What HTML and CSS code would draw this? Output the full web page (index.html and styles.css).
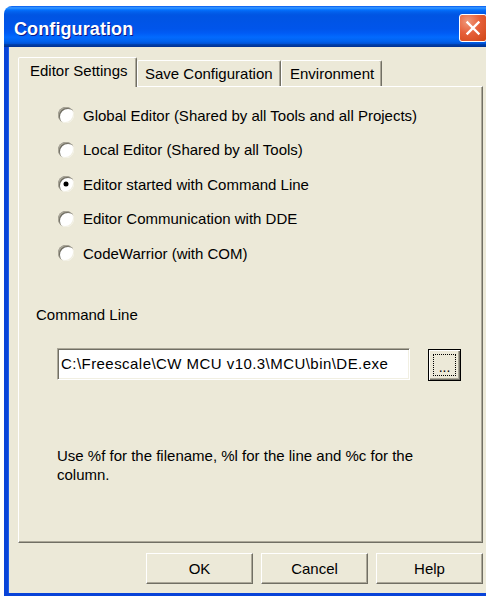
FILE: index.html
```html
<!DOCTYPE html>
<html lang="en">
<head>
<meta charset="utf-8">
<title>Configuration</title>
<link rel="stylesheet" href="styles.css">
</head>
<body>
<div class="window">
  <div class="titlebar">
    <span class="title">Configuration</span>
    <button class="close" aria-label="Close">
      <svg width="16" height="16" viewBox="0 0 16 16"><path d="M2.5 2.5 L13.5 13.5 M13.5 2.5 L2.5 13.5" stroke="#fff" stroke-width="2.4" stroke-linecap="square" fill="none"/></svg>
    </button>
  </div>
  <div class="client">
    <div class="tabs">
      <div class="tab tab-editor active">Editor Settings</div>
      <div class="tab tab-save">Save Configuration</div>
      <div class="tab tab-env">Environment</div>
    </div>
    <div class="panel">
      <div class="options">
        <label class="option"><span class="radio"></span>Global Editor (Shared by all Tools and all Projects)</label>
        <label class="option"><span class="radio"></span>Local Editor (Shared by all Tools)</label>
        <label class="option"><span class="radio checked"></span>Editor started with Command Line</label>
        <label class="option"><span class="radio"></span>Editor Communication with DDE</label>
        <label class="option"><span class="radio"></span>CodeWarrior (with COM)</label>
      </div>
      <div class="field-label">Command Line</div>
      <div class="field-row">
        <input class="textbox" type="text" value="C:\Freescale\CW MCU v10.3\MCU\bin\DE.exe" readonly>
        <button class="browse"><span class="focus">...</span></button>
      </div>
      <p class="hint">Use %f for the filename, %l for the line and %c for the column.</p>
    </div>
    <div class="actions">
      <button class="btn">OK</button>
      <button class="btn">Cancel</button>
      <button class="btn">Help</button>
    </div>
  </div>
</div>
</body>
</html>
```
FILE: styles.css
```css
* {
  box-sizing: border-box;
}

html, body {
  margin: 0;
  width: 486px;
  height: 596px;
  overflow: hidden;
  background: #fff;
}

body {
  font-family: "Liberation Sans", Arial, sans-serif;
  font-size: 15px;
  color: #000;
}

button, input {
  font-family: inherit;
  font-size: inherit;
  color: inherit;
}

/* window frame */
.window {
  margin: 6px 0 0 4px;
  width: 490px;
}

.titlebar {
  height: 41px;
  display: flex;
  align-items: flex-start;
  border-radius: 8px 8px 0 0;
  background: linear-gradient(180deg,
    #0058ee 0%, #3593ff 4%, #288eff 6%, #127dff 8%, #036ffc 10%,
    #0262ee 14%, #0057e5 20%, #0054e3 24%, #0055eb 56%, #005bf5 66%,
    #026afe 76%, #0062ef 86%, #0052d6 92%, #0040ab 94%, #003092 100%);
}

.title {
  margin: 13px 0 0 10px;
  font-weight: bold;
  font-size: 18px;
  line-height: 20px;
  color: #fff;
  text-shadow: 1px 1px 0 #0a1a8c;
  letter-spacing: 0.1px;
}

.close {
  margin: 8px 7px 0 auto;
  width: 28px;
  height: 28px;
  padding: 0;
  border: 1px solid #fff;
  border-radius: 3px;
  background: radial-gradient(circle at 30% 25%, #f09a7c 0%, #e6603a 45%, #d04515 100%);
  display: flex;
  align-items: center;
  justify-content: center;
}

.client {
  width: 490px;
  height: 549px;
  padding: 10px 0 0 10px;
  background: #ece9d8;
  border-left: 4px solid #0843d8;
  border-bottom: 3px solid #0843d8;
  box-shadow: inset 1px 0 0 #1c5ce8;
}

/* tab strip */
.tabs {
  display: flex;
  align-items: flex-end;
  height: 29px;
}

.tab {
  height: 26px;
  padding-top: 4px;
  line-height: 18px;
  white-space: nowrap;
  border: 1px solid;
  border-bottom: 0;
  border-color: #fff #716f64 transparent #fff;
  border-radius: 2px 2px 0 0;
  box-shadow: inset -1px 0 0 #aca899;
  background: #ece9d8;
}

.tab.active {
  height: 30px;
  margin-bottom: -1px;
  position: relative;
  z-index: 1;
}

.tab-editor {
  width: 119px;
  padding-left: 11px;
}

.tab-save {
  width: 144px;
  padding-left: 7px;
}

.tab-env {
  width: 101px;
  padding-left: 8px;
}

/* tab page */
.panel {
  width: 465px;
  height: 457px;
  padding-top: 11px;
  border: 1px solid;
  border-color: #fff #716f64 #716f64 #fff;
  box-shadow: inset -1px -1px 0 #aca899;
}

.options {
  margin-left: 39px;
}

.option {
  display: flex;
  align-items: center;
  height: 34.5px;
  white-space: nowrap;
}

.radio {
  flex: none;
  position: relative;
  width: 16px;
  height: 16px;
  margin-right: 9px;
  border-radius: 50%;
  background: #fff;
  box-shadow: inset 1px 1px 0 #aca899, inset 2px 2px 0 #716f64, inset -1px -1px 0 #f1efe2;
}

.radio.checked::after {
  content: "";
  position: absolute;
  left: 6px;
  top: 6px;
  width: 4px;
  height: 4px;
  border-radius: 50%;
  background: #000;
  box-shadow: 0 0 0 0.5px #000;
}

.field-label {
  margin: 35px 0 0 17px;
  line-height: 18px;
}

.field-row {
  display: flex;
  align-items: flex-start;
  margin: 24px 0 0 38px;
}

.textbox {
  width: 353px;
  height: 32px;
  margin: 0;
  padding: 0 3px;
  letter-spacing: 0.45px;
  background: #fff;
  border: 1px solid;
  border-color: #aca899 #fff #fff #aca899;
  box-shadow: inset 1px 1px 0 #716f64, inset -1px -1px 0 #f1efe2;
  outline: none;
}

.browse {
  width: 33px;
  height: 32px;
  margin: 1px 0 0 18px;
  padding: 4px;
  background: #ece9d8;
  border: 1px solid #000;
  box-shadow: inset 1px 1px 0 #fff, inset -1px -1px 0 #716f64, inset -2px -2px 0 #aca899;
}

.focus {
  display: flex;
  align-items: flex-end;
  justify-content: center;
  width: 100%;
  height: 100%;
  border: 1px dotted #000;
  font-size: 14px;
  line-height: 14px;
  padding-bottom: 1px;
}

.hint {
  margin: 65px 0 0 38px;
  width: 380px;
  line-height: 19px;
}

/* dialog buttons */
.actions {
  display: flex;
  justify-content: flex-end;
  gap: 8px;
  width: 465px;
  margin-top: 10px;
}

.btn {
  width: 107px;
  height: 31px;
  padding: 0;
  background: #ece9d8;
  border: 1px solid;
  border-color: #fff #716f64 #716f64 #fff;
  box-shadow: inset -1px -1px 0 #aca899;
}
```
